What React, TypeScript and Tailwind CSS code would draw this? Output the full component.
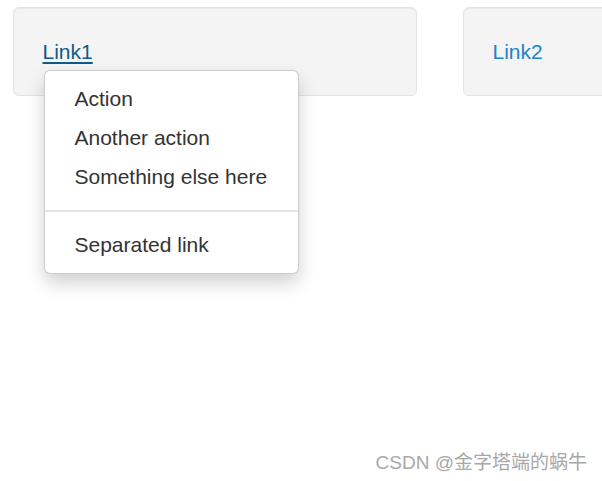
import React from 'react';

const items = ['Action', 'Another action', 'Something else here'];

const App: React.FC = () => {
  return (
    <div className="relative h-[481px] w-[602px] overflow-hidden bg-white font-['Liberation_Sans',Arial,sans-serif] text-[21px] leading-[30px] text-[#333]">
      <div className="flex pt-[7px] pl-[13px] gap-[46px]">
        <div className="relative w-[404px] shrink-0 rounded-[6px] border-[1.5px] border-[#e3e3e3] bg-[#f4f4f4] p-[28.5px] shadow-[inset_0_1px_1px_rgba(0,0,0,0.05)]">
          <a className="text-[#0f5b8c] underline decoration-[2px] underline-offset-[3px]">Link1</a>

          {/* open dropdown */}
          <ul className="absolute left-[29.5px] top-[62px] z-10 w-[255px] rounded-[6px] border-[1.5px] border-[rgba(0,0,0,0.2)] bg-white pt-[8.5px] pb-[8.5px] shadow-[0_9px_18px_rgba(0,0,0,0.18)]">
            {items.map((label) => (
              <li key={label}>
                <a className="block py-[4.5px] pl-[30px] whitespace-nowrap text-[#333]">{label}</a>
              </li>
            ))}
            <li className="my-[13.5px] h-[1.5px] bg-[#e5e5e5]" />
            <li>
              <a className="block py-[4.5px] pl-[30px] whitespace-nowrap text-[#333]">Separated link</a>
            </li>
          </ul>
        </div>
        <div className="w-[405px] shrink-0 rounded-[6px] border-[1.5px] border-[#e3e3e3] bg-[#f4f4f4] p-[28.5px] shadow-[inset_0_1px_1px_rgba(0,0,0,0.05)]">
          <a className="text-[#1a85cc]">Link2</a>
        </div>
      </div>

      <div className="absolute bottom-[6px] right-[15px] font-['Liberation_Sans','Noto_Sans_CJK_SC',sans-serif] text-[19px] leading-[24px] text-[#a8a8a8]">
        CSDN @金字塔端的蜗牛
      </div>
    </div>
  );
};

export default App;
